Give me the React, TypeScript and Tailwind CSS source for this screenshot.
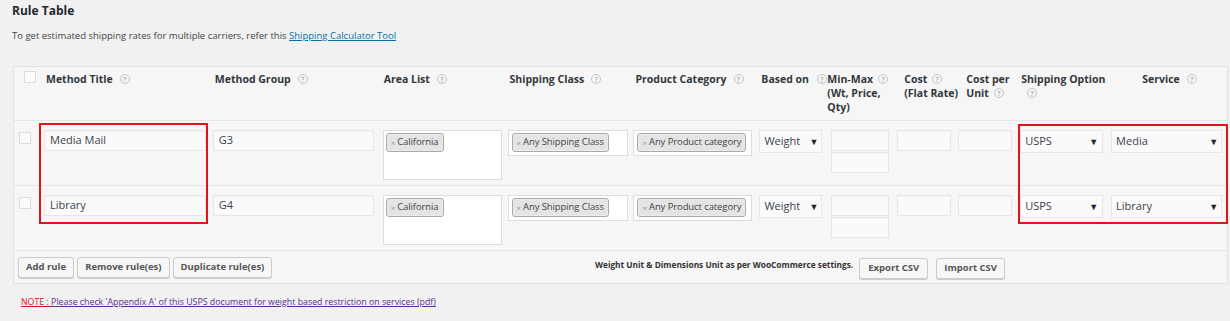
import React from 'react';

// help tooltip glyph shown next to column titles
const Help: React.FC<{ className?: string }> = ({ className = '' }) => (
  <span
    className={`inline-flex h-[10px] w-[10px] shrink-0 items-center justify-center rounded-full border border-[#c3c6c9] text-[7px] font-bold leading-none text-[#b4b9be] ${className}`}
  >
    ?
  </span>
);

const Checkbox: React.FC<{ className?: string }> = ({ className = '' }) => (
  <span className={`block h-[12px] w-[12px] border border-[#dcdcdc] bg-[#fbfbfb] ${className}`} />
);

const TextInput: React.FC<{ value?: string; className?: string }> = ({ value = '', className = '' }) => (
  <div
    className={`flex h-[21px] items-center border border-[#e6e6e6] bg-[#fafafa] pl-[5px] text-[11px] text-[#3c434a] shadow-[inset_0_1px_1px_rgba(0,0,0,0.03)] ${className}`}
  >
    {value}
  </div>
);

const Select: React.FC<{ value: string; className?: string }> = ({ value, className = '' }) => (
  <div
    className={`flex h-[23px] items-center justify-between border border-[#e6e6e6] bg-[#fafafa] pl-[4px] pr-[3px] text-[11px] text-[#3c434a] ${className}`}
  >
    <span>{value}</span>
    <span className="text-[9px] text-[#222]">▼</span>
  </div>
);

const Chip: React.FC<{ label: string }> = ({ label }) => (
  <span className="flex h-[19px] items-center gap-[2px] whitespace-nowrap rounded-[3px] border border-[#aaa] bg-[#e4e4e4] px-[4px] text-[9.5px] tracking-[-0.1px] text-[#444] shadow-[inset_0_0_2px_#fff]">
    <span className="text-[8px] text-[#999]">×</span>
    {label}
  </span>
);

const Button: React.FC<{ label: string; className?: string }> = ({ label, className = '' }) => (
  <button
    className={`h-[21px] rounded-[3px] border border-[#cccccc] bg-[#f7f7f7] px-[7px] text-[9.5px] font-bold text-[#555] shadow-[0_1px_0_#ccc] ${className}`}
  >
    {label}
  </button>
);

const rows = [
  { title: 'Media Mail', group: 'G3', service: 'Media' },
  { title: 'Library', group: 'G4', service: 'Library' },
];

export default function App() {
  return (
    <div className="relative h-[321px] w-[1230px] overflow-hidden bg-[#f1f1f1] font-['Open_Sans',sans-serif] text-[#444]">
      <h3 className="pl-[12px] pt-[3px] text-[12px] font-bold leading-[16px] text-[#23282d]">Rule Table</h3>
      <p className="mt-[10px] pl-[12px] text-[9.5px] leading-[14px] text-[#444]">
        To get estimated shipping rates for multiple carriers, refer this{' '}
        <a className="text-[#0073aa] underline">Shipping Calculator Tool</a>
      </p>

      {/* Rule table */}
      <div className="ml-[13px] mt-[23px] w-[1215px] border border-[#e2e2e2] bg-[#f6f6f6]">
        {/* header */}
        <div className="flex h-[54px] border-b border-[#e5e5e5] text-[10.5px] font-bold leading-[14px] text-[#32373c]">
          <div className="w-[27px] pl-[10px] pt-[4px]">
            <Checkbox />
          </div>
          <div className="flex w-[168px] items-center gap-[7px] self-start pl-[5px] pt-[5px]">
            Method Title <Help />
          </div>
          <div className="flex w-[170px] items-center gap-[7px] self-start pl-[6px] pt-[5px]">
            Method Group <Help />
          </div>
          <div className="flex w-[126px] items-center gap-[7px] self-start pl-[5px] pt-[5px]">
            Area List <Help />
          </div>
          <div className="flex w-[126px] items-center gap-[7px] self-start pl-[5px] pt-[5px]">
            Shipping Class <Help />
          </div>
          <div className="flex w-[126px] items-center gap-[7px] self-start pl-[5px] pt-[5px]">
            Product Category <Help />
          </div>
          <div className="flex w-[70px] items-center gap-[8px] self-start whitespace-nowrap pl-[5px] pt-[5px]">
            Based on <Help />
          </div>
          <div className="w-[72px] pl-[1px] pt-[5px]">
            <div className="flex items-center gap-[5px]">
              Min-Max <Help />
            </div>
            <div>(Wt, Price,</div>
            <div>Qty)</div>
          </div>
          <div className="w-[62px] whitespace-nowrap pl-[6px] pt-[5px]">
            <div className="flex items-center gap-[5px]">
              Cost <Help />
            </div>
            <div>(Flat Rate)</div>
          </div>
          <div className="w-[56px] whitespace-nowrap pl-[6px] pt-[5px]">
            <div>Cost per</div>
            <div className="flex items-center gap-[5px]">
              Unit <Help />
            </div>
          </div>
          <div className="w-[91px] whitespace-nowrap pl-[5px] pt-[5px]">
            <div>Shipping Option</div>
            <div className="flex h-[14px] items-center pl-[6px]">
              <Help />
            </div>
          </div>
          <div className="flex w-[120px] items-center justify-center gap-[7px] self-start pl-[5px] pt-[5px]">
            Service <Help />
          </div>
        </div>

        {/* rule rows */}
        {rows.map((r) => (
          <div key={r.title} className="flex h-[65px] border-b border-[#e5e5e5] pt-[9px]">
            <div className="w-[27px] pl-[5px] pt-[2px]">
              <Checkbox />
            </div>
            <div className="w-[168px] pl-[3px]">
              <TextInput value={r.title} className="w-[162px]" />
            </div>
            <div className="w-[170px] pl-[4px]">
              <TextInput value={r.group} className="w-[161px]" />
            </div>
            <div className="w-[126px] pl-[4px]">
              <div className="flex h-[50px] w-[119px] items-start border border-[#dddddd] bg-white pl-[2px] pt-[2px]">
                <Chip label="California" />
              </div>
            </div>
            <div className="w-[126px] pl-[3px]">
              <div className="flex h-[26px] w-[120px] items-start border border-[#dddddd] bg-white pl-[3px] pt-[2px]">
                <Chip label="Any Shipping Class" />
              </div>
            </div>
            <div className="w-[126px] pl-[3px]">
              <div className="flex h-[26px] w-[119px] items-start border border-[#dddddd] bg-white pl-[3px] pt-[2px]">
                <Chip label="Any Product category" />
              </div>
            </div>
            <div className="w-[70px] pl-[3px]">
              <Select value="Weight" className="w-[63px]" />
            </div>
            <div className="flex w-[67px] flex-col gap-[1px] pl-[5px]">
              <TextInput className="w-[58px]" />
              <TextInput className="w-[58px]" />
            </div>
            <div className="w-[62px] pl-[4px]">
              <TextInput className="w-[54px]" />
            </div>
            <div className="w-[61px] pl-[3px]">
              <TextInput className="w-[54px]" />
            </div>
            <div className="w-[91px] pl-[4px]">
              <Select value="USPS" className="w-[83px] pr-[4px]" />
            </div>
            <div className="w-[120px] pl-[4px]">
              <Select value={r.service} className="w-[111px]" />
            </div>
          </div>
        ))}

        {/* footer actions */}
        <div className="flex h-[32px] items-start pl-[4px] pr-[222px] pt-[6px]">
          <div className="flex gap-[3px]">
            <Button label="Add rule" />
            <Button label="Remove rule(es)" />
            <Button label="Duplicate rule(es)" />
          </div>
          <div className="flex flex-1 items-start justify-end gap-[6px]">
            <span className="mt-[2px] text-[8.3px] font-bold leading-[12px] text-[#333]">
              Weight Unit &amp; Dimensions Unit as per WooCommerce settings.
            </span>
            <div className="flex gap-[8px] pt-[1px]">
              <Button label="Export CSV" className="px-[8px]" />
              <Button label="Import CSV" />
            </div>
          </div>
        </div>
      </div>

      <p className="mt-[12px] pl-[21px] text-[8.8px] leading-[12px]">
        <a className="text-[#e0101c] underline">NOTE : </a>
        <a className="text-[#5b2d91] underline">
          Please check 'Appendix A' of this USPS document for weight based restriction on services (pdf)
        </a>
      </p>

      {/* highlight boxes */}
      <div className="pointer-events-none absolute left-[39px] top-[123px] h-[101px] w-[169px] border-2 border-[#e3131b]" />
      <div className="pointer-events-none absolute left-[1018px] top-[124px] h-[100px] w-[210px] border-2 border-[#e3131b]" />
    </div>
  );
}
